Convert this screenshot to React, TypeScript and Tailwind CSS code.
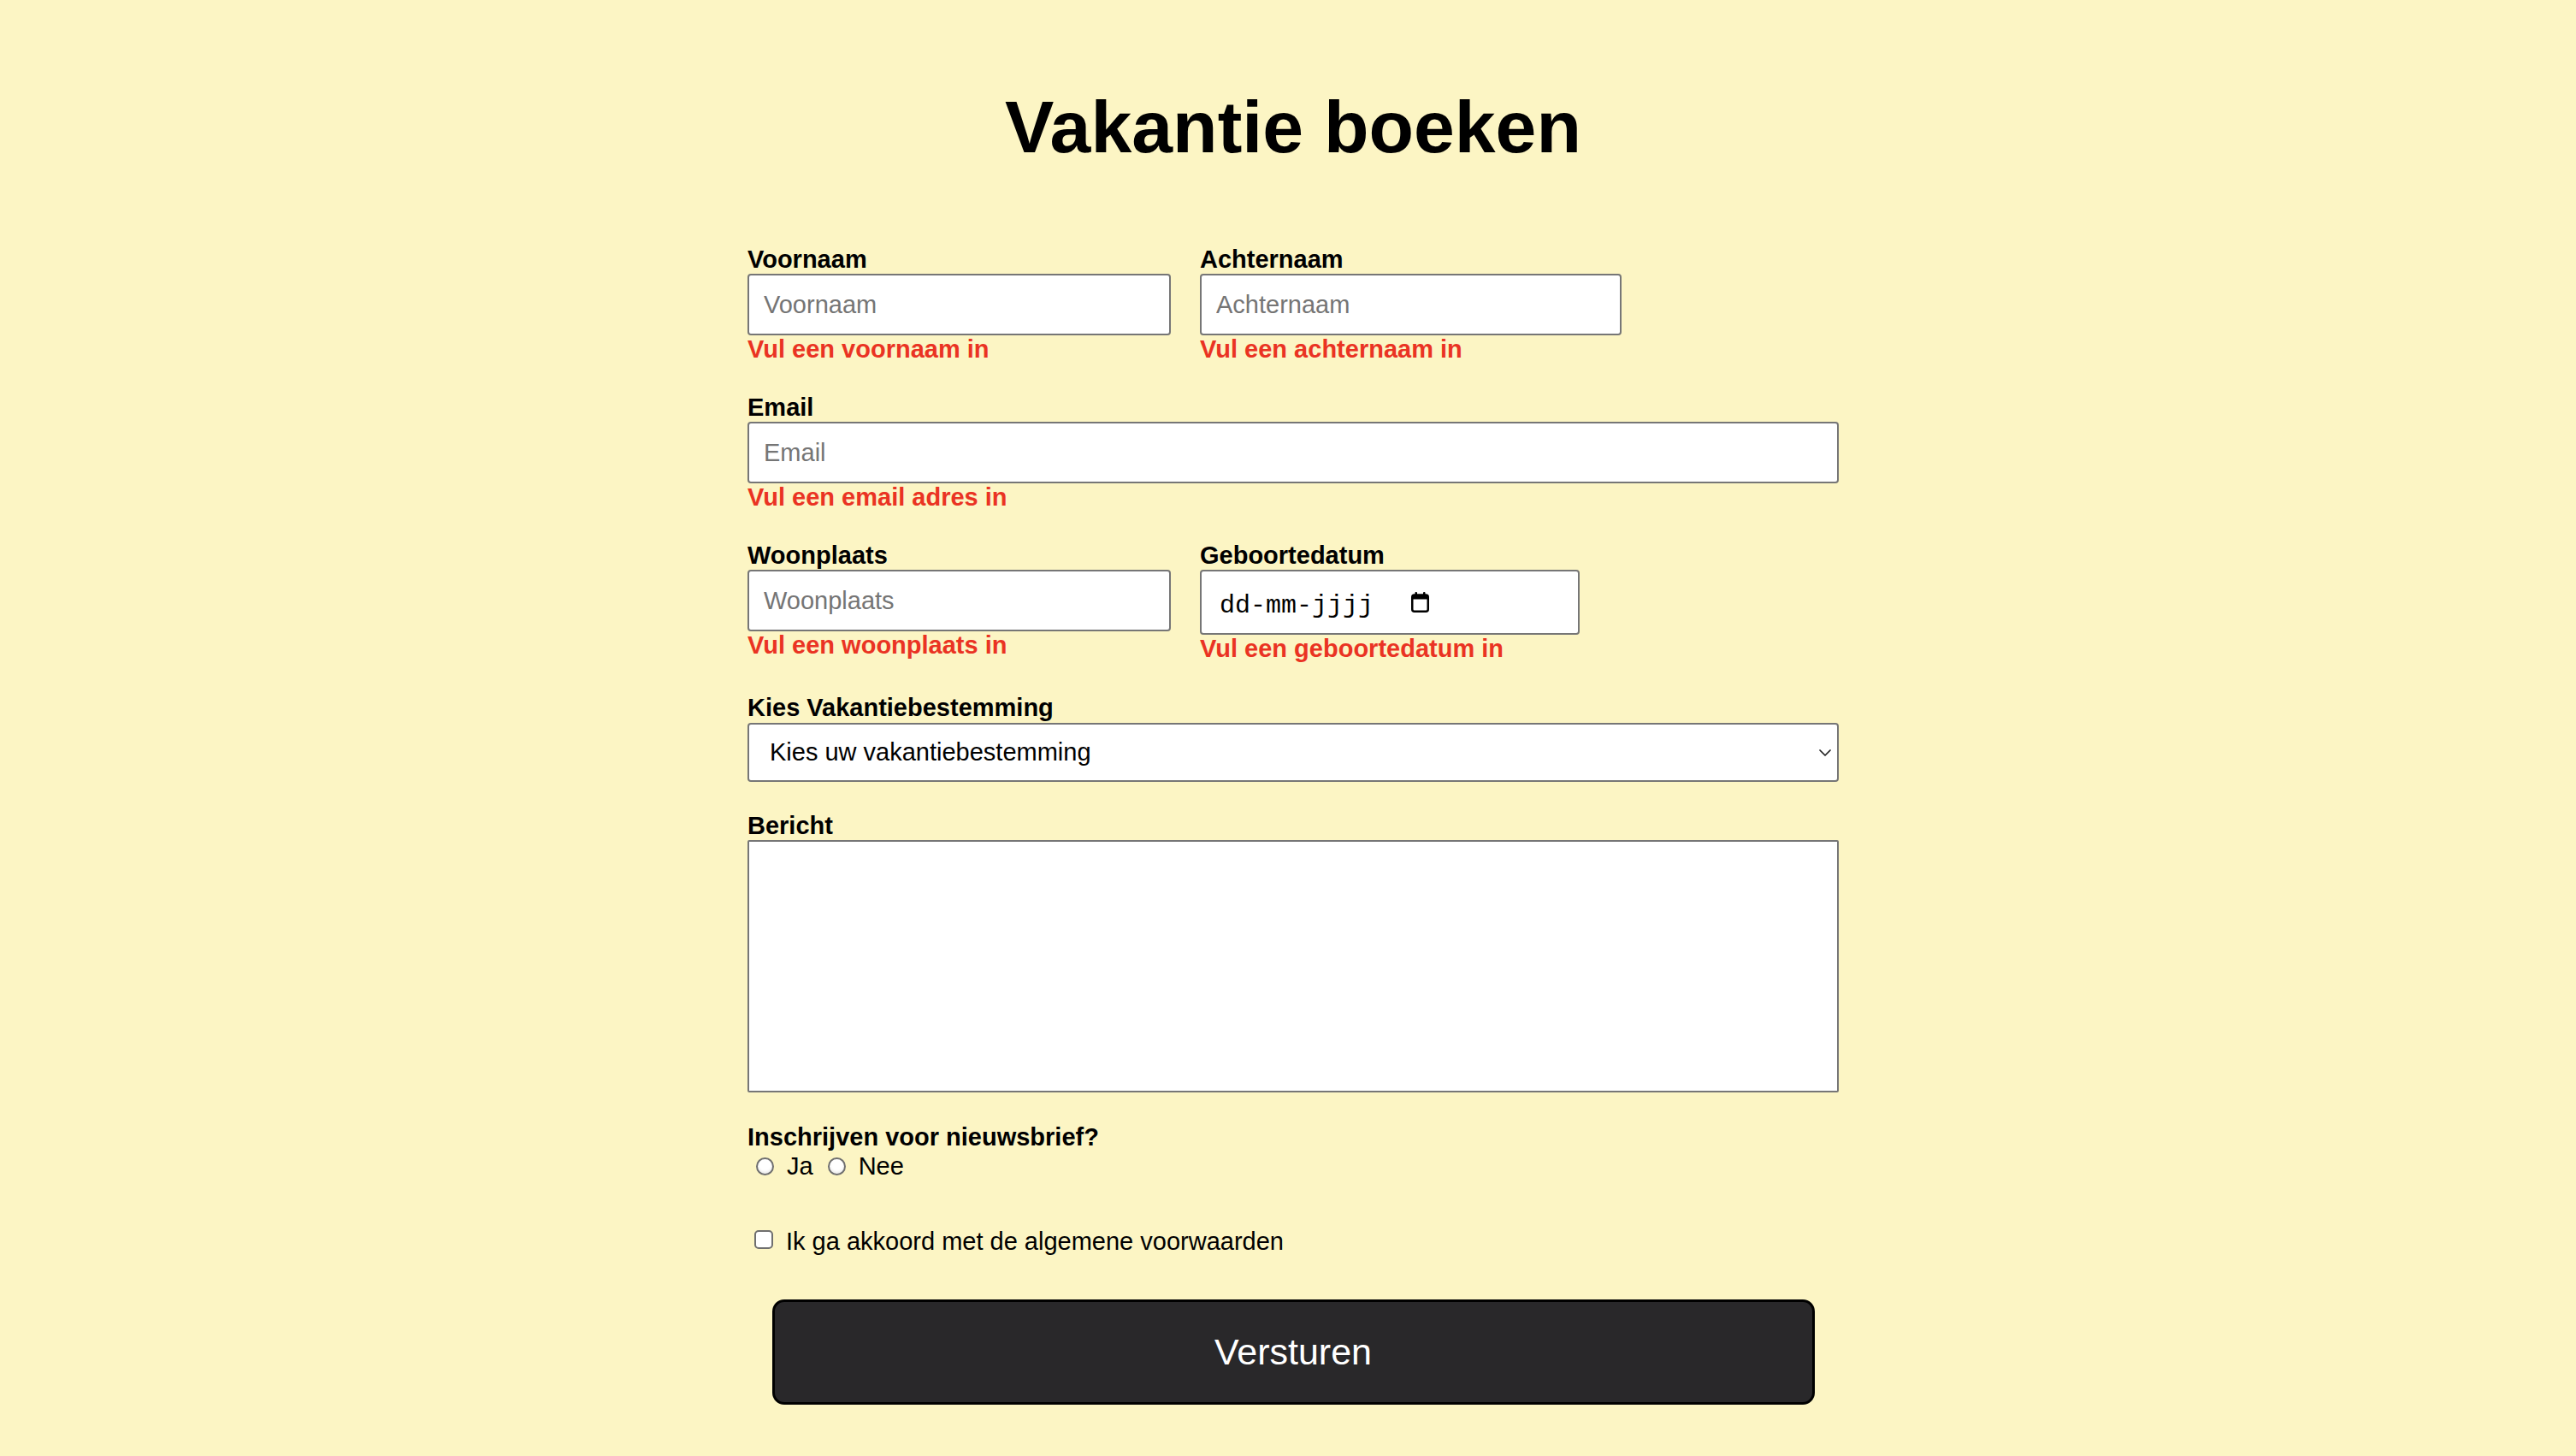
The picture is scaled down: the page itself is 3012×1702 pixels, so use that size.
import { ChevronDown } from "lucide-react"

const label = "block text-[29px] leading-[34px] font-bold text-black"
const error = "block text-[29px] leading-[33px] font-bold text-[#ea3323]"
const input =
  "h-[72px] rounded-[4px] border-2 border-[#767676] bg-white px-[17px] text-[29px] text-black outline-none placeholder:text-[#757575]"
const radio = "h-[21px] w-[21px] appearance-none rounded-full border-2 border-[#6f6f6f] bg-white shadow-[inset_0_-2px_3px_rgba(0,0,0,0.08)]"

function Field({ name, width }: { name: string; width: string }) {
  return (
    <div className="flex flex-col">
      <label className={label}>{name}</label>
      <input className={`${input} ${width}`} placeholder={name} />
    </div>
  )
}

function CalendarIcon() {
  return (
    <svg width="21" height="24" viewBox="0 0 21 24" fill="none">
      <rect x="1.25" y="3.5" width="18.5" height="19.25" rx="2.5" stroke="black" strokeWidth="2.5" />
      <rect x="1.25" y="3.5" width="18.5" height="5" fill="black" />
      <rect x="4.5" y="0" width="2.5" height="4" rx="1" fill="black" />
      <rect x="14" y="0" width="2.5" height="4" rx="1" fill="black" />
    </svg>
  )
}

export default function App() {
  return (
    <div className="min-h-screen bg-[#fcf5c4] pl-[12px] pb-[40px] font-['Liberation_Sans',Arial,sans-serif] text-black">
      <h1 className="pt-[105px] text-center text-[86px] font-bold leading-none">Vakantie boeken</h1>

      <form className="mx-auto mt-[95px] flex w-[1276px] flex-col">
        <div className="mb-[34px] flex gap-[34px]">
          <div className="flex flex-col">
            <Field name="Voornaam" width="w-[495px]" />
            <span className={error}>Vul een voornaam in</span>
          </div>
          <div className="flex flex-col">
            <Field name="Achternaam" width="w-[493px]" />
            <span className={error}>Vul een achternaam in</span>
          </div>
        </div>

        <div className="mb-[34px] flex flex-col">
          <Field name="Email" width="w-full" />
          <span className={error}>Vul een email adres in</span>
        </div>

        <div className="mb-[35px] flex gap-[34px]">
          <div className="flex flex-col">
            <Field name="Woonplaats" width="w-[495px]" />
            <span className={error}>Vul een woonplaats in</span>
          </div>
          <div className="flex flex-col">
            <label className={label}>Geboortedatum</label>
            <div className="flex h-[76px] w-[444px] items-center rounded-[4px] border-2 border-[#767676] bg-white pl-[21px]">
              <span className="mt-[8px] font-['Liberation_Mono',monospace] text-[30px] leading-none">dd-mm-jjjj</span>
              <span className="ml-[44px]">
                <CalendarIcon />
              </span>
            </div>
            <span className={error}>Vul een geboortedatum in</span>
          </div>
        </div>

        <div className="mb-[34px] flex flex-col">
          <label className={label}>Kies Vakantiebestemming</label>
          <div className="relative mt-[1px]">
            <select className="h-[69px] w-full appearance-none rounded-[4px] border-2 border-[#767676] bg-white pl-[24px] text-[29px] text-black outline-none">
              <option>Kies uw vakantiebestemming</option>
              <option>Spanje</option>
              <option>Italië</option>
              <option>Frankrijk</option>
            </select>
            <ChevronDown
              className="pointer-events-none absolute right-[4px] top-1/2 h-[24px] w-[24px] -translate-y-1/2 text-[#222]"
              strokeWidth={1.75}
            />
          </div>
        </div>

        <div className="mb-[35px] flex flex-col">
          <label className={label}>Bericht</label>
          <textarea className="h-[295px] w-full resize-none rounded-[2px] border-2 border-[#767676] bg-white p-[8px] text-[29px] outline-none" />
        </div>

        <div className="flex flex-col">
          <span className={label}>Inschrijven voor nieuwsbrief?</span>
          <div className="flex items-center text-[29px] leading-[34px]">
            <input type="radio" name="nieuwsbrief" className={`ml-[10px] ${radio}`} />
            <span className="ml-[15px]">Ja</span>
            <input type="radio" name="nieuwsbrief" className={`ml-[17px] ${radio}`} />
            <span className="ml-[15px]">Nee</span>
          </div>
        </div>

        <div className="mt-[54px] flex text-[29px] leading-[34px]">
          <input
            type="checkbox"
            className="ml-[8px] mt-[4px] h-[22px] w-[22px] appearance-none rounded-[5px] border-2 border-[#6f6f6f] bg-white"
          />
          <span className="ml-[15px]">Ik ga akkoord met de algemene voorwaarden</span>
        </div>

        <button
          type="button"
          className="mx-auto mt-[51px] h-[123px] w-[1219px] rounded-[14px] border-[3px] border-black bg-[#29282a] text-[43px] text-white"
        >
          Versturen
        </button>
      </form>
    </div>
  )
}
